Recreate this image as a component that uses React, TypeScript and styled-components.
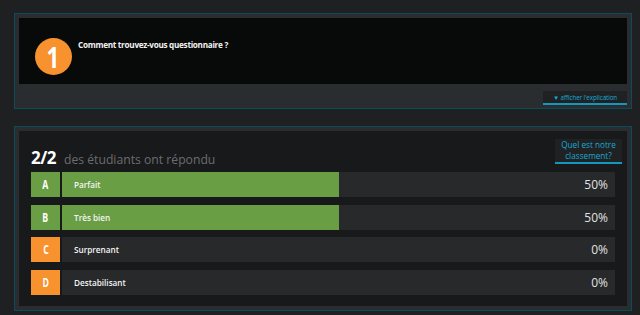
import React from 'react';
import styled, { createGlobalStyle } from 'styled-components';

const GlobalStyle = createGlobalStyle`
  html, body {
    margin: 0;
    padding: 0;
    background: #1f2022;
    font-family: 'Open Sans', 'Liberation Sans', sans-serif;
  }
`;

const Page = styled.div`
  width: 618px;
  padding: 13px 0 0 14px;
  display: flex;
  flex-direction: column;
  gap: 17px;
`;

const Panel = styled.section`
  border: 1px solid #0c4b5b;
  background: #2a2d2f;
  padding: 4px 4px 0 4px;
`;

const QuestionBox = styled.div`
  background: #080909;
  height: 66px;
  display: flex;
  align-items: flex-start;
  padding: 20px 16px 0;
  box-sizing: border-box;
  gap: 6px;
`;

const Badge = styled.div`
  width: 37px;
  height: 37px;
  border-radius: 50%;
  background: #f7922e;
  color: #fff;
  display: flex;
  align-items: center;
  justify-content: center;
  font-weight: 700;
  font-size: 28px;
  line-height: 1;
`;

const Narrow = styled.span<{ $scale: number }>`
  display: inline-block;
  transform: scaleX(${({ $scale }) => $scale});
`;

const QuestionText = styled.div`
  color: #f2f2f2;
  font-size: 8.2px;
  line-height: 12px;
  font-weight: 700;
  margin-top: 1px;
  letter-spacing: -0.3px;
`;

const PanelFooter = styled.div`
  height: 24px;
  display: flex;
  justify-content: flex-end;
  align-items: flex-start;
  padding-top: 7px;
  box-sizing: border-box;
`;

const LinkButton = styled.button<{ $width: number }>`
  width: ${({ $width }) => $width}px;
  background: #1f2123;
  border: none;
  border-bottom: 2px solid #1497bd;
  color: #19a9d2;
  font-family: 'Open Sans', 'Liberation Sans', sans-serif;
  cursor: pointer;
  text-align: center;
`;

const ExplainButton = styled(LinkButton)`
  height: 14px;
  font-size: 6.3px;
  line-height: 11px;
  padding: 0 4px;
  white-space: nowrap;
  letter-spacing: -0.1px;
`;

const ResultsBox = styled.div`
  background: #18191b;
  padding: 7px 12px 11px;
  margin-bottom: 4px;
`;

const Header = styled.div`
  display: flex;
  justify-content: space-between;
  align-items: flex-start;
  height: 34px;
`;

const Title = styled.div`
  display: flex;
  align-items: baseline;
  gap: 8px;
  padding-top: 8px;
`;

const Count = styled.span`
  color: #fff;
  font-size: 17px;
  font-weight: 700;
  letter-spacing: -0.5px;
`;

const Subtitle = styled.span`
  color: #6a6d70;
  font-size: 12.2px;
`;

const RankButton = styled(LinkButton)`
  font-size: 8.2px;
  line-height: 10.5px;
  padding: 1px 4px 1px;
  margin-top: 1px;
  margin-right: -7px;
`;

const Rows = styled.div`
  display: flex;
  flex-direction: column;
  gap: 7.67px;
`;

const Row = styled.div`
  display: flex;
  height: 25px;
  gap: 2px;
`;

const Letter = styled.div<{ $color: string }>`
  width: 29px;
  background: ${({ $color }) => $color};
  color: #fff;
  display: flex;
  align-items: center;
  justify-content: center;
  font-weight: 700;
  font-size: 12.5px;
`;

const Bar = styled.div`
  flex: 1;
  position: relative;
  background: #27292b;
  display: flex;
  align-items: center;
  justify-content: space-between;
  padding: 0 7px 0 12px;
`;

const Fill = styled.div`
  position: absolute;
  left: 0;
  top: 0;
  bottom: 0;
  background: #6a9e45;
`;

const Label = styled.span`
  position: relative;
  color: #f4f4f4;
  font-size: 8.2px;
  font-weight: 600;
`;

const Percent = styled.span`
  position: relative;
  color: #e2e2e2;
  font-size: 12px;
`;

const answers = [
  { letter: 'A', label: 'Parfait', pct: 50, correct: true },
  { letter: 'B', label: 'Très bien', pct: 50, correct: true },
  { letter: 'C', label: 'Surprenant', pct: 0, correct: false },
  { letter: 'D', label: 'Destabilisant', pct: 0, correct: false },
];

export default function App() {
  return (
    <>
      <GlobalStyle />
      <Page>
        <Panel>
          <QuestionBox>
            <Badge>
              <Narrow $scale={0.8}>1</Narrow>
            </Badge>
            <QuestionText>Comment trouvez-vous questionnaire ?</QuestionText>
          </QuestionBox>
          <PanelFooter>
            <ExplainButton $width={84}>▼ afficher l'explication</ExplainButton>
          </PanelFooter>
        </Panel>
        <Panel>
          <ResultsBox>
            <Header>
              <Title>
                <Count>2/2</Count>
                <Subtitle>des étudiants ont répondu</Subtitle>
              </Title>
              <RankButton $width={67}>
                Quel est notre
                <br />
                classement?
              </RankButton>
            </Header>
            <Rows>
              {answers.map((a) => (
                <Row key={a.letter}>
                  <Letter $color={a.correct ? '#6a9e45' : '#f7922e'}>
                    <Narrow $scale={0.7}>{a.letter}</Narrow>
                  </Letter>
                  <Bar>
                    <Fill style={{ width: `${a.pct}%` }} />
                    <Label>{a.label}</Label>
                    <Percent>{a.pct}%</Percent>
                  </Bar>
                </Row>
              ))}
            </Rows>
          </ResultsBox>
        </Panel>
      </Page>
    </>
  );
}
